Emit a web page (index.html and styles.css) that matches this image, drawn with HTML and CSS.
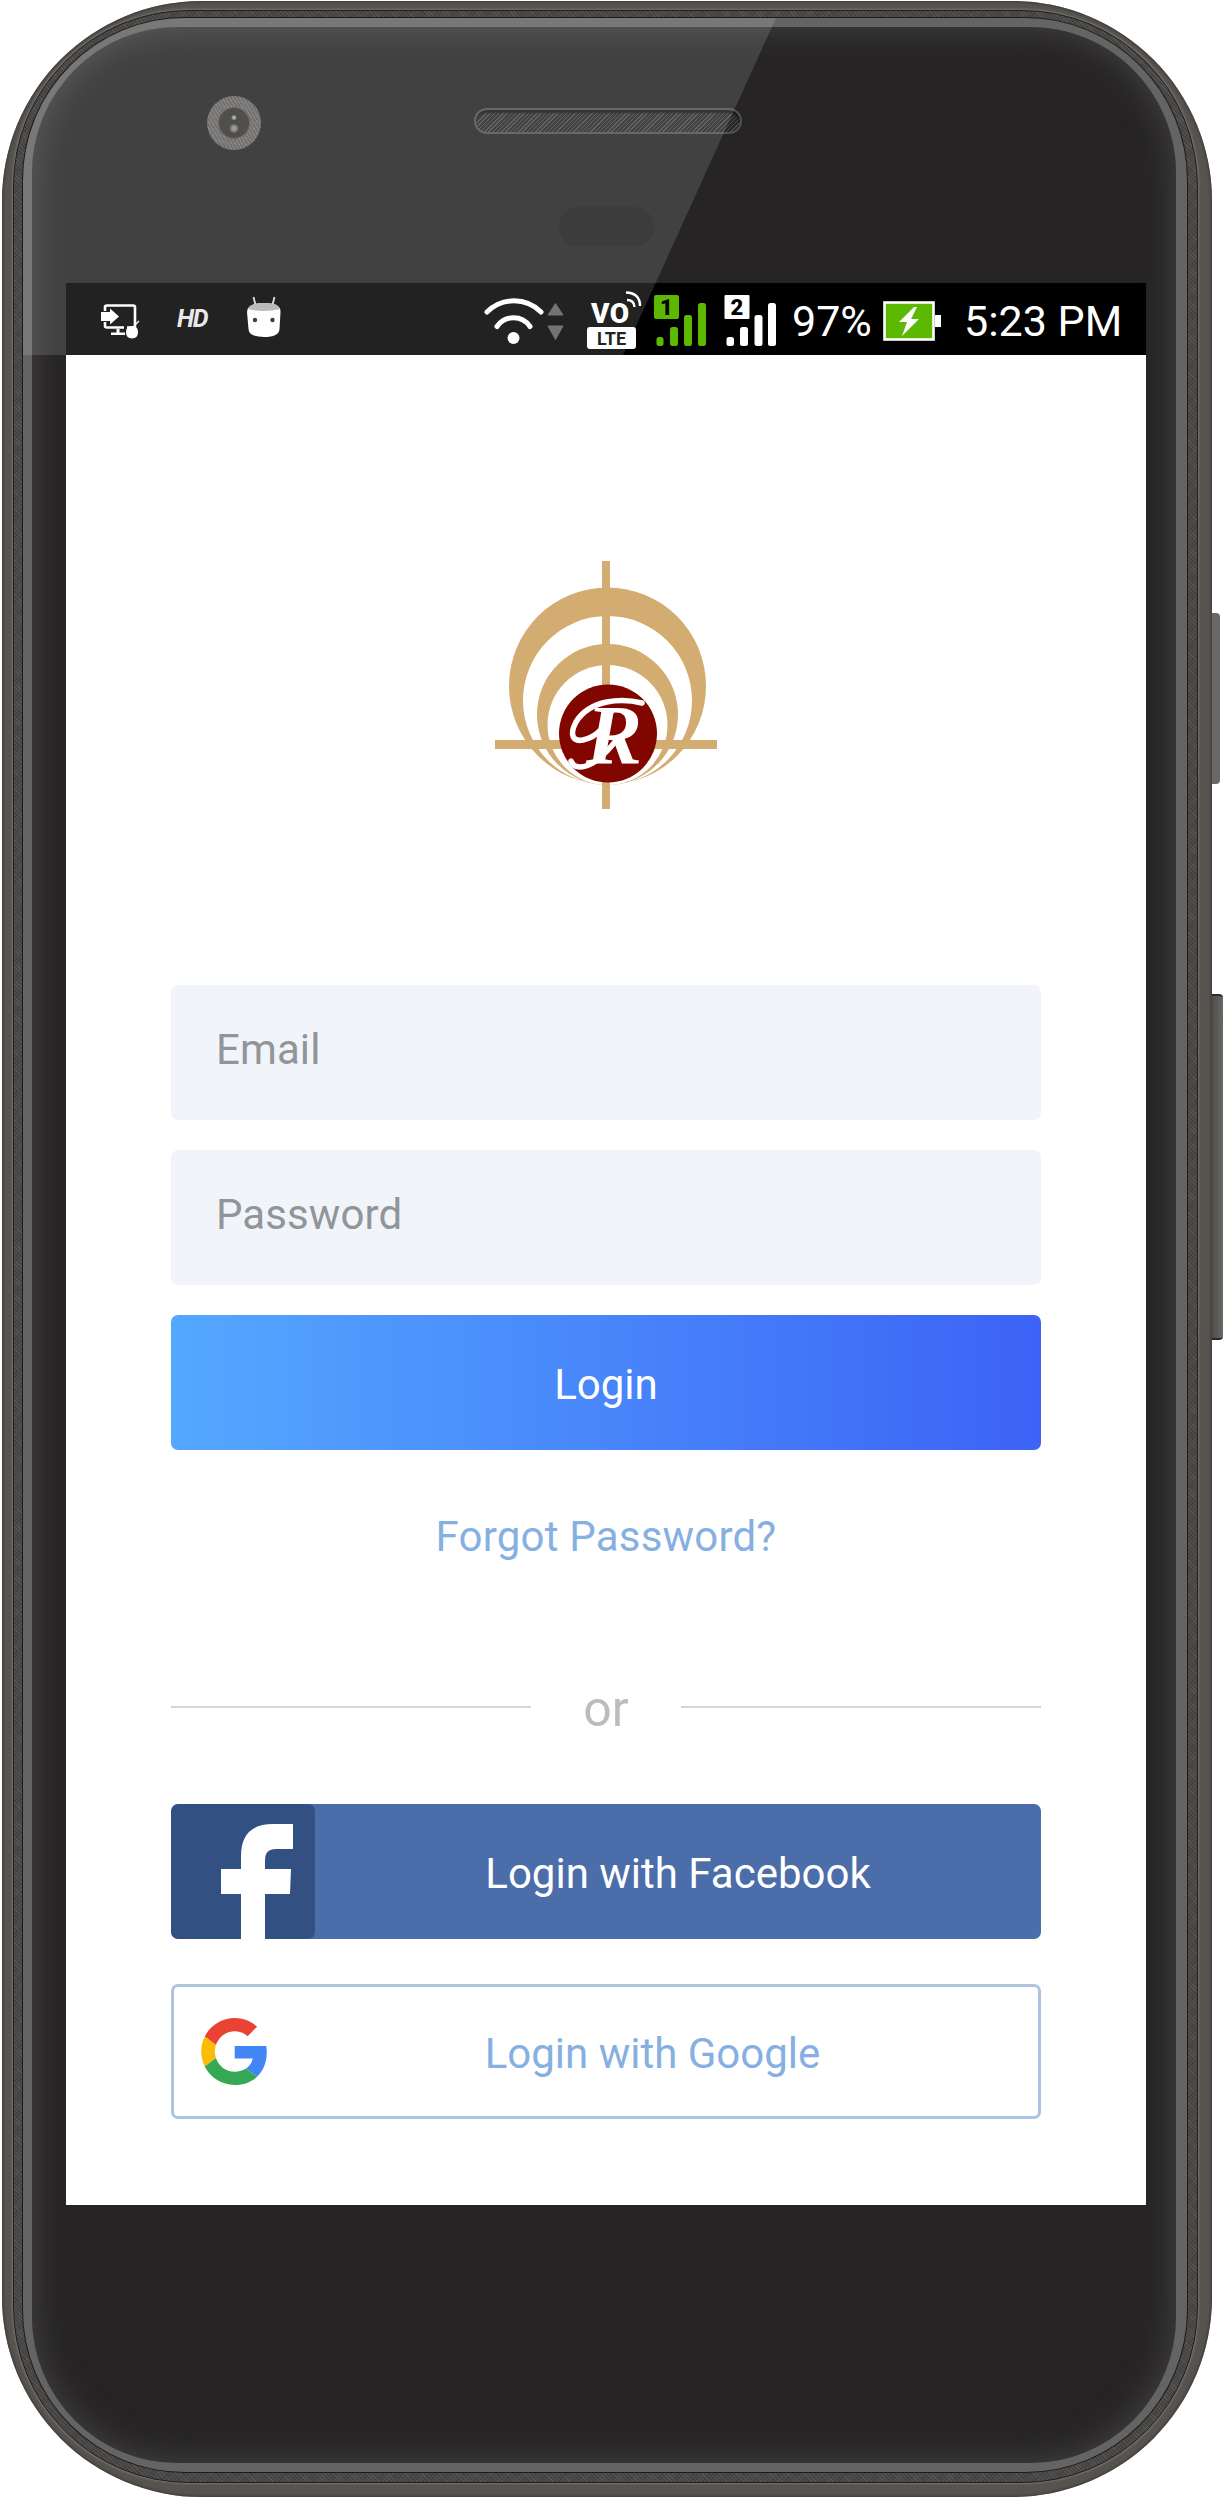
FILE: index.html
```html
<!DOCTYPE html>
<html lang="en">
<head>
<meta charset="utf-8">
<title>Login</title>
<link rel="stylesheet" href="styles.css">
</head>
<body>
<div class="phone">
  <div class="side-key side-key-volume"></div>
  <div class="side-key side-key-power"></div>
  <div class="metal">
    <div class="texture">
      <div class="band">
        <div class="glass">
          <div class="camera"><div class="lens"></div></div>
          <div class="speaker"></div>
          <div class="sensor"></div>
          <div class="screen">
            <div class="status">
              <svg class="ic-cast" viewBox="100 283 42 72" aria-hidden="true">
                <path d="M105 311V307Q105 305.500 107 305.500H133Q135 305.500 135 307V326Q135 327.500 133 327.500H127M105 322V326Q105 327.500 107 327.500H124" fill="none" stroke="#fff" stroke-width="2.600"/>
                <path d="M101 312H110V308.500L119 316.500L110 324.500V321H101Z" fill="#fff"/>
                <path d="M116.500 329H119.500V332.500H125V335H111V332.500H116.500Z" fill="#fff"/>
                <path d="M126 332Q126 326 132 326Q138 326 138 332Q138 338.500 132 338.500Q126 338.500 126 332Z" fill="#fff"/>
                <path d="M134 326L139 321" stroke="#fff" stroke-width="1.300"/>
              </svg>
              <span class="hd">HD</span>
              <svg class="ic-android" viewBox="247 283 36 72" aria-hidden="true">
                <path d="M253.500 297L255.500 305M274.500 297L272.500 305" stroke="#ddd" stroke-width="1.800"/>
                <path d="M247 312Q247 303 264 303Q281 303 280.500 312L279.500 329Q279 337 264 337Q249 337 248.500 329Z" fill="#fff"/>
                <path d="M248 309Q250 303 264 303Q278 303 280 309Q272 311 264 311Q256 311 248 309Z" fill="#b0b0b0"/>
                <circle cx="255" cy="320" r="2.200" fill="#222"/>
                <circle cx="272.500" cy="320" r="2.200" fill="#222"/>
              </svg>
              <svg class="ic-network" viewBox="484 283 294 72" aria-hidden="true">
                <path d="M487 312A38 38 0 0 1 541 312M497 326.500A20 20 0 0 1 530 326.500" fill="none" stroke="#fff" stroke-width="5" stroke-linecap="round"/>
                <circle cx="513.500" cy="338" r="6" fill="#fff"/>
                <path d="M555.500 303.500L563 315H548Z M548 326H563L555.500 339.500Z" fill="#5e5e5e" stroke="#5e5e5e" stroke-width="1" stroke-linejoin="round"/>
                <text class="net-vo" x="591" y="323">VO</text>
                <path d="M627 300Q634 300 634.500 307M626 292.500Q640 293 640 306" fill="none" stroke="#fff" stroke-width="2.400"/>
                <rect x="587" y="327" width="49" height="22" rx="3" fill="#fff"/>
                <text class="net-lte" x="611.500" y="344.500">LTE</text>
                <rect x="654" y="295" width="25" height="24" rx="2" fill="#5cb800"/>
                <text class="net-sim" x="666.500" y="315">1</text>
                <rect x="656.500" y="337" width="7" height="9" rx="2.500" fill="#5cb800"/>
                <rect x="670" y="327" width="8" height="19" rx="2.500" fill="#5cb800"/>
                <rect x="684" y="315" width="8" height="31" rx="2.500" fill="#5cb800"/>
                <rect x="698" y="303" width="8" height="43" rx="2.500" fill="#5cb800"/>
                <rect x="724.500" y="295" width="25" height="24" rx="1" fill="#fff"/>
                <text class="net-sim" x="737" y="315">2</text>
                <rect x="726.500" y="337" width="7.500" height="9" rx="2.500" fill="#fff"/>
                <rect x="740" y="327" width="8" height="19" rx="2.500" fill="#fff"/>
                <rect x="754.500" y="315" width="8" height="31" rx="2.500" fill="#fff"/>
                <rect x="768" y="303" width="8" height="43" rx="2.500" fill="#fff"/>
              </svg>
              <span class="percent">97%</span>
              <svg class="ic-battery" viewBox="883 283 59 72" aria-hidden="true">
                <rect x="884.500" y="302.500" width="49" height="37" fill="#5cb800" stroke="#fff" stroke-width="2.600"/>
                <rect x="935" y="315" width="6" height="12" fill="#fff"/>
                <path d="M914 307L899 322H907L902 336L919 319H911L917 307Z" fill="#fff"/>
              </svg>
              <span class="time">5:23 PM</span>
            </div>
            <div class="content">
              <svg class="logo" viewBox="495 561 222 248" role="img" aria-label="Logo">
                <circle cx="607.500" cy="686" r="98.500" fill="#d2ac70"/>
                <circle cx="607.500" cy="700.500" r="84.500" fill="#fff"/>
                <circle cx="607.500" cy="714.500" r="70.500" fill="#d2ac70"/>
                <circle cx="607.500" cy="725" r="60" fill="#fff"/>
                <rect x="602" y="561" width="8" height="248" fill="#d2ac70"/>
                <rect x="495" y="740" width="222" height="9" fill="#d2ac70"/>
                <circle cx="608" cy="733.500" r="49" fill="#820600"/>
                <path class="logo-swash" d="M642 703C622 698 590 699 576 722C569 735 573 742 583 740C597 737 606 726 611 712"/>
                <path class="logo-swash" d="M571 761C574 769 584 769 596 761C605 754 612 746 617 739"/>
                <text class="logo-r" x="614" y="764">R</text>
              </svg>
              <div class="field"><span>Email</span></div>
              <div class="field field-next"><span>Password</span></div>
              <div class="btn btn-login"><span class="btn-text">Login</span></div>
              <div class="forgot">Forgot Password?</div>
              <div class="divider"><i class="rule"></i><span class="or">or</span><i class="rule"></i></div>
              <div class="btn btn-facebook">
                <span class="fb-box">
                  <svg class="fb-f" viewBox="171 1804 144 135" aria-hidden="true">
                    <path d="M241 1939V1894H221V1869H241V1856Q241 1824 273 1824H293V1849H276Q265 1849 265 1860V1869H291L290 1894H265V1939Z" fill="#fff"/>
                  </svg>
                </span>
                <span class="btn-label">Login with Facebook</span>
              </div>
              <div class="btn btn-google">
                <svg class="g-mark" viewBox="0 0 47 48" aria-hidden="true">
                  <path fill="#EA4335" d="M24 9.500c3.540 0 6.710 1.220 9.210 3.600l6.850-6.850C35.900 2.380 30.470 0 24 0 14.620 0 6.510 5.380 2.560 13.220l7.980 6.190C12.430 13.720 17.740 9.500 24 9.500z"/>
                  <path fill="#4285F4" d="M46.980 24.550c0-1.570-.15-3.090-.38-4.550H24v9.020h12.940c-.58 2.960-2.260 5.480-4.780 7.180l7.730 6c4.510-4.180 7.090-10.360 7.090-17.650z"/>
                  <path fill="#FBBC05" d="M10.530 28.590c-.48-1.450-.76-2.990-.76-4.590s.27-3.140.76-4.590l-7.980-6.190C.92 16.460 0 20.120 0 24c0 3.880.92 7.540 2.560 10.780l7.970-6.190z"/>
                  <path fill="#34A853" d="M24 48c6.480 0 11.930-2.130 15.890-5.810l-7.730-6c-2.150 1.450-4.920 2.300-8.160 2.300-6.260 0-11.570-4.220-13.470-9.910l-7.980 6.190C6.510 42.620 14.620 48 24 48z"/>
                </svg>
                <span class="btn-label">Login with Google</span>
              </div>
            </div>
          </div>
        </div>
        <div class="reflection"></div>
      </div>
    </div>
  </div>
</div>
</body>
</html>
```
FILE: styles.css
```css
* { box-sizing: border-box; }
html, body { margin: 0; padding: 0; background: #fff; }
body { font-family: Roboto, "Liberation Sans", sans-serif; }

.phone {
  position: relative;
  width: 1224px;
  height: 2498px;
  padding: 1px 12px 1px 2px;
  display: flex;
}

/* device shell */
.metal {
  flex: 1;
  display: flex;
  padding: 9px 14px 14px 11px;
  border-radius: 200px;
  background: #575450;
  box-shadow: inset 0 0 3px 1px #3b3936;
}
.texture {
  flex: 1;
  display: flex;
  padding: 7px 10px 10px 9px;
  border-radius: 176px;
  border: 1px solid #1f1e1c;
  background:
    repeating-linear-gradient(45deg, rgba(255,255,255,.05) 0 1px, rgba(0,0,0,.07) 1px 3px),
    repeating-linear-gradient(-45deg, rgba(255,255,255,.04) 0 1px, rgba(0,0,0,.05) 1px 2px),
    #4a4846;
  box-shadow: 0 0 2px 1px rgba(150,146,142,.55);
}
.band {
  flex: 1;
  display: flex;
  position: relative;
  overflow: hidden;
  padding: 9px 11px 9px 9px;
  border-radius: 162px;
  background: #646464;
  box-shadow: 0 0 0 1px #1c1b1a;
}
.glass {
  flex: 1;
  display: flex;
  position: relative;
  padding: 256px 30px 258px 34px;
  border-radius: 146px;
  background: #262425;
  box-shadow: inset 0 0 34px rgba(78,76,74,.85);
}
.reflection {
  position: absolute;
  left: 0;
  top: 0;
  width: 753px;
  height: 337px;
  background: rgba(255,255,255,.135);
  clip-path: polygon(0 0, 100% 0, 600px 100%, 0 100%);
  pointer-events: none;
}
.side-key { position: absolute; border-radius: 0 4px 4px 0; }
.side-key-volume { left: 1212px; top: 613px; width: 8px; height: 171px; background: #6a6866; }
.side-key-power {
  left: 1212px; top: 994px; width: 11px; height: 346px;
  background: linear-gradient(90deg, #4f4d4a, #6a6865);
  border-top: 2px solid #2a2927;
  border-bottom: 2px solid #2a2927;
}

.camera {
  position: absolute;
  left: 175px;
  top: 69px;
  width: 54px;
  height: 54px;
  display: flex;
  align-items: center;
  justify-content: center;
  border-radius: 50%;
  background:
    repeating-linear-gradient(60deg, rgba(255,255,255,.1) 0 1px, rgba(0,0,0,.1) 1px 3px),
    #696867;
}
.lens {
  width: 30px;
  height: 30px;
  border-radius: 50%;
  background:
    radial-gradient(circle at 50% 32%, #a8a8a4 0 1px, transparent 3px),
    radial-gradient(circle at 50% 68%, #8a8a85 0 2px, transparent 5px),
    #363532;
  box-shadow: 0 0 0 1px #55534f;
}
.speaker {
  position: absolute;
  left: 442px;
  top: 81px;
  width: 268px;
  height: 26px;
  border-radius: 13px;
  background: repeating-linear-gradient(135deg, #4c4c4b 0 1px, #272727 1px 3px);
  border: 2px solid #525151;
  box-shadow: inset 0 3px 2px #171717;
}
.sensor {
  position: absolute;
  left: 527px;
  top: 180px;
  width: 95px;
  height: 40px;
  border-radius: 20px;
  background: #1f1e1f;
}

/* screen */
.screen {
  flex: 1;
  display: flex;
  flex-direction: column;
  position: relative;
  background: #fff;
}
.status {
  flex: none;
  height: 72px;
  display: flex;
  align-items: center;
  padding-left: 34px;
  background: #000;
  color: #fff;
}
.status svg { display: block; height: 72px; flex: none; }
.ic-cast { width: 42px; }
.hd {
  width: 70px;
  margin-left: 35px;
  font-size: 25px;
  font-weight: 700;
  font-style: italic;
  letter-spacing: -1.500px;
  line-height: 72px;
  opacity: .9;
}
.ic-android { width: 36px; }
.ic-network { width: 294px; margin-left: 201px; }
.percent, .time { font-size: 43px; line-height: 72px; padding-top: 3px; }
.percent { margin-left: 14px; width: 91px; }
.ic-battery { width: 59px; }
.time { margin-left: 22px; }
.net-vo { font: 900 28px Roboto, sans-serif; fill: #fff; letter-spacing: .5px; }
.net-lte { font: 700 18px Roboto, sans-serif; fill: #000; text-anchor: middle; }
.net-sim { font: 900 22px Roboto, sans-serif; fill: #000; text-anchor: middle; }

.content {
  flex: 1;
  display: flex;
  flex-direction: column;
  padding: 206px 105px 0;
}
.logo { display: block; align-self: center; width: 222px; height: 248px; flex: none; margin-bottom: 176px; }
.logo-r { font: italic 700 84px "Liberation Serif", serif; fill: #fff; text-anchor: middle; }
.logo-swash { fill: none; stroke: #fff; stroke-width: 5.500; stroke-linecap: round; }

.field {
  height: 135px;
  display: flex;
  align-items: center;
  padding: 0 45px 6px;
  border-radius: 7px;
  background: #f1f5f9;
  color: #90959a;
  font-size: 42px;
  letter-spacing: .1px;
}
.field-next { margin-top: 30px; }
.btn {
  height: 135px;
  display: flex;
  align-items: center;
  border-radius: 7px;
  font-size: 42px;
}
.btn-login {
  margin-top: 30px;
  justify-content: center;
  color: #fff;
  background: linear-gradient(90deg, #54a8ff, #3c63f6);
}
.btn-text { padding-top: 3px; }
.forgot {
  margin-top: 60px;
  height: 54px;
  line-height: 54px;
  text-align: center;
  color: #86b0e1;
  font-size: 42px;
  letter-spacing: .2px;
}
.divider {
  margin-top: 113px;
  height: 60px;
  display: flex;
  align-items: center;
}
.rule { flex: 1; height: 2px; background: #d6d6d6; }
.or { width: 150px; padding-top: 4px; text-align: center; font-size: 50px; color: #bcbcbc; }
.btn-facebook {
  margin-top: 67px;
  color: #fff;
  background: #4b6da9;
  overflow: hidden;
}
.fb-box { flex: none; width: 144px; height: 135px; display: block; background: #335083; border-radius: 7px; }
.fb-f { display: block; width: 144px; height: 135px; }
.btn-label { flex: 1; text-align: center; padding-top: 3px; }
.btn-google {
  margin-top: 45px;
  padding-left: 27px;
  color: #86b0e1;
  background: #fff;
  border: 3px solid #adc4e0;
}
.g-mark { display: block; flex: none; width: 66px; height: 67px; }
```
